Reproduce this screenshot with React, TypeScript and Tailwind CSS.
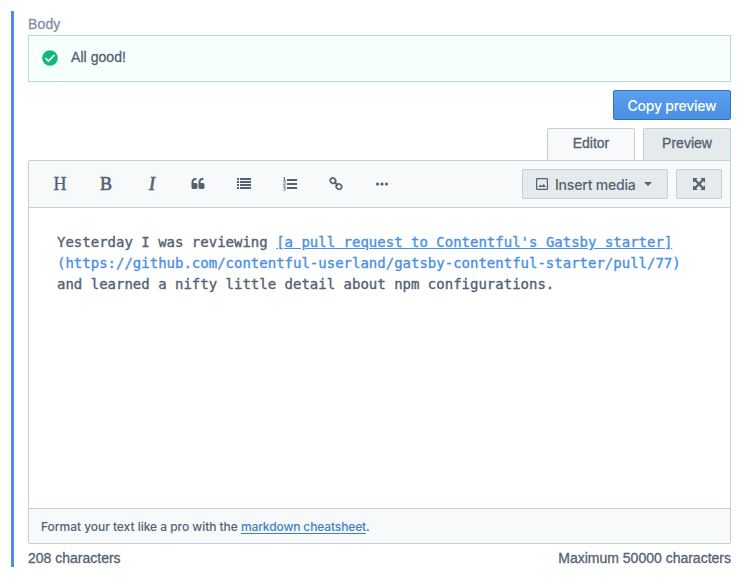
import React from "react";

const helv = "font-['Liberation_Sans',Arial,sans-serif]";
const inter = "font-['Inter','Liberation_Sans',sans-serif]";
const serif = "font-['Liberation_Serif',serif]";

function CheckIcon() {
  return (
    <svg className="block h-4 w-4" viewBox="0 0 16 16">
      <circle cx="8" cy="8" r="7.8" fill="#0eb87f" />
      <path d="M3.4 8 6.4 11 12.4 5" fill="none" stroke="#f5fffa" strokeWidth="1.7" />
    </svg>
  );
}

function QuoteIcon() {
  return (
    <svg className="block h-3.5 w-3.5" viewBox="0 0 1792 1792" fill="currentColor">
      <path d="M832 960v384q0 80-56 136t-136 56h-384q-80 0-136-56t-56-136v-704q0-104 40.5-198.5t109.5-163.5 163.5-109.5 198.5-40.5h64q26 0 45 19t19 45v128q0 26-19 45t-45 19h-64q-106 0-181 75t-75 181v32q0 40 28 68t68 28h224q80 0 136 56t56 136zm896 0v384q0 80-56 136t-136 56h-384q-80 0-136-56t-56-136v-704q0-104 40.5-198.5t109.5-163.5 163.5-109.5 198.5-40.5h64q26 0 45 19t19 45v128q0 26-19 45t-45 19h-64q-106 0-181 75t-75 181v32q0 40 28 68t68 28h224q80 0 136 56t56 136z" />
    </svg>
  );
}

function ListIcon() {
  return (
    <svg className="block h-3.5 w-3.5" viewBox="0 0 14 14" fill="currentColor">
      {[1, 4, 7, 10].map((y) => (
        <g key={y}>
          <rect x="0" y={y} width="2" height="2" />
          <rect x="3" y={y} width="11" height="2" />
        </g>
      ))}
    </svg>
  );
}

function OrderedListIcon() {
  return (
    <svg className="block h-3.5 w-3.5" viewBox="0 0 14 14" fill="none" stroke="currentColor">
      <path d="M4 3H14M4 7H14M4 11H14" strokeWidth="2" />
      <path
        d="M0.3 0.9 1.5 0.4V3.4M0.2 3.6H2.7M0.3 5.4Q2.4 4.4 2.4 5.7 2.3 6.6 0.5 8H2.8M0.3 9.9H2.5L1.3 11.3Q2.6 11.4 2.5 12.5 1.9 13.7 0.2 13.1"
        strokeWidth="0.85"
      />
    </svg>
  );
}

function LinkIcon() {
  return (
    <svg className="block h-3.5 w-3.5" viewBox="0 0 14 14" fill="none" stroke="currentColor" strokeWidth="1.7">
      <rect x="-2.8" y="-2.5" width="5.6" height="5" rx="2.3" transform="translate(4 3.7) rotate(45)" />
      <rect x="-2.8" y="-2.5" width="5.6" height="5" rx="2.3" transform="translate(9.9 9.6) rotate(45)" />
      <path d="M5 4.7 8.9 8.6" />
    </svg>
  );
}

function DotsIcon() {
  return (
    <svg className="block h-3.5 w-3.5" viewBox="0 0 14 14" fill="currentColor">
      <circle cx="2.5" cy="7" r="1.6" />
      <circle cx="7" cy="7" r="1.6" />
      <circle cx="11.5" cy="7" r="1.6" />
    </svg>
  );
}

function ImageIcon() {
  return (
    <svg className="block h-3 w-3" viewBox="0 0 12 12" fill="none">
      <rect x="0.6" y="0.6" width="10.8" height="10.8" rx="0.6" stroke="currentColor" strokeWidth="1.2" />
      <path d="M2.2 9 4.3 6.7 5.8 8 7.8 6 9.9 9Z" fill="currentColor" />
    </svg>
  );
}

function ExpandIcon() {
  return (
    <svg className="block h-3 w-3" viewBox="0 0 12 12" fill="currentColor">
      <path d="M2 2 10 10M10 2 2 10" stroke="currentColor" strokeWidth="2.2" />
      <path d="M0 0H4.8L0 4.8ZM12 0V4.8L7.2 0ZM0 12V7.2L4.8 12ZM12 12H7.2L12 7.2Z" />
    </svg>
  );
}

function Tool({ children }: { children: React.ReactNode }) {
  return <button className="flex h-8 w-[46px] items-center justify-center">{children}</button>;
}

export default function App() {
  return (
    <div className={`h-[584px] w-[744px] overflow-hidden bg-white pt-[11px] pl-[11px] text-[#536171] ${helv}`}>
      <div className="flex h-[556px] w-[720px] flex-col border-l-3 border-[#4a90e2] pl-[14px]">
        <label className="h-6 pt-[5px] text-[14px] leading-4 tracking-[0.15px] text-[#8091a5] [-webkit-text-stroke:0.3px]">
          Body
        </label>
        <div className="flex h-[47px] shrink-0 items-start border border-[#b7dccf] bg-[#f5fffb] pl-[13px]">
          <div className="pt-[14px]"><CheckIcon /></div>
          <span className="ml-[13px] pt-[13px] text-[14px] leading-4 tracking-[0.05px] [-webkit-text-stroke:0.3px]">All good!</span>
        </div>
        <button className={`mt-2 h-[30px] w-[118px] shrink-0 self-end rounded-[2px] border border-[#3072be] bg-linear-to-b from-[#5b9fef] to-[#4a90e2] text-[14px] font-medium tracking-[-0.25px] text-white ${inter}`}>
          Copy preview
        </button>
        <div className="mt-2 flex h-8 shrink-0 justify-end gap-2 text-[14px] leading-4 [-webkit-text-stroke:0.3px]">
          <button className="flex w-[88px] justify-center rounded-t-[2px] border border-b-0 border-[#c3cfd5] bg-[#f7f9fa] pt-[6px]">Editor</button>
          <button className="flex w-[88px] justify-center rounded-t-[2px] border border-b-0 border-[#c3cfd5] bg-[#e5ebed] pt-[6px]">Preview</button>
        </div>
        <div className="flex h-[384px] shrink-0 flex-col overflow-hidden rounded-b-[2px] rounded-tl-[2px] border border-[#c3cfd5]">
          <div className="flex h-[47px] shrink-0 items-center border-b border-[#c3cfd5] bg-[#f7f9fa] pr-2 pl-2">
            <Tool><span className={`text-[18px] leading-4 [-webkit-text-stroke:0.35px] ${serif}`}>H</span></Tool>
            <Tool><span className={`text-[18px] leading-4 [-webkit-text-stroke:0.6px] ${serif}`}>B</span></Tool>
            <Tool><span className={`text-[18px] leading-4 italic [-webkit-text-stroke:0.7px] ${serif}`}>I</span></Tool>
            <Tool><QuoteIcon /></Tool>
            <Tool><ListIcon /></Tool>
            <Tool><OrderedListIcon /></Tool>
            <Tool><LinkIcon /></Tool>
            <Tool><DotsIcon /></Tool>
            <button className={`ml-auto flex h-[30px] w-[146px] items-center rounded-[2px] border border-[#c3cfd5] bg-[#e5ebed] pl-[13px] text-[14px] font-medium tracking-[-0.2px] ${inter}`}>
              <ImageIcon />
              <span className="ml-[7px] w-[81px] whitespace-nowrap text-left">Insert media</span>
              <svg className="ml-2 h-1 w-2" viewBox="0 0 8 4"><path d="M0 0H8L4 4Z" fill="currentColor" /></svg>
            </button>
            <button className="ml-2 flex h-[30px] w-[46px] items-center justify-center rounded-[2px] border border-[#c3cfd5] bg-[#e5ebed]">
              <ExpandIcon />
            </button>
          </div>
          <div className="flex-1 bg-white pt-6 pl-7 font-['DejaVu_Sans_Mono',monospace] text-[14px] leading-[21px] whitespace-pre [-webkit-text-stroke:0.35px]">
            <p>Yesterday I was reviewing <span className="text-[#4a90e2] underline">[a pull request to Contentful's Gatsby starter]</span></p>
            <p className="text-[#4a90e2]">(https://github.com/contentful-userland/gatsby-contentful-starter/pull/77)</p>
            <p>and learned a nifty little detail about npm configurations.</p>
          </div>
          <div className={`h-[35px] shrink-0 border-t border-[#c3cfd5] bg-[#f7f9fa] pt-[10px] pl-3 text-[12px] leading-4 font-medium tracking-[-0.04px] ${inter}`}>
            Format your text like a pro with the <a className="inline-block h-[15px] border-b border-[#3c80cf] align-top tracking-[-0.13px] text-[#3c80cf]">markdown cheatsheet</a>.
          </div>
        </div>
        <div className="flex justify-between pt-[6px] text-[14px] leading-4 [-webkit-text-stroke:0.3px]">
          <span>208 characters</span>
          <span>Maximum 50000 characters</span>
        </div>
      </div>
    </div>
  );
}
